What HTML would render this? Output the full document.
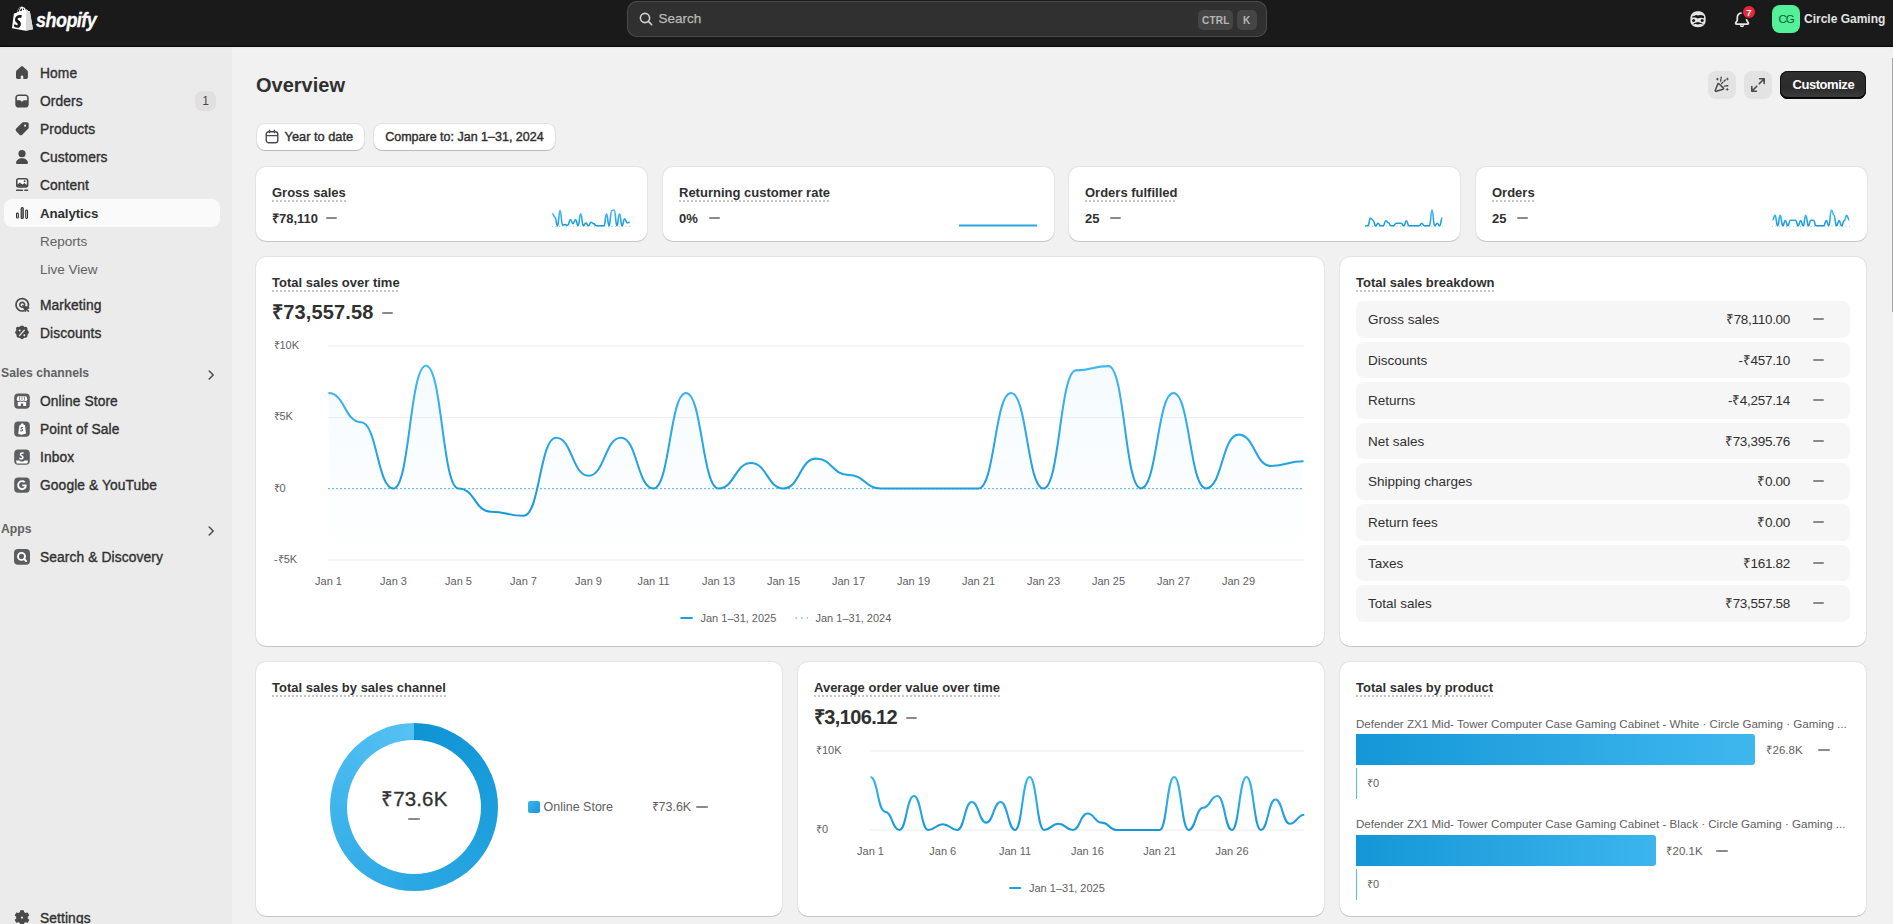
<!DOCTYPE html>
<html><head><meta charset="utf-8"><title>Overview</title>
<style>
*{box-sizing:border-box;margin:0;padding:0}
html,body{width:1893px;height:924px;overflow:hidden}
body{position:relative;background:#f1f1f1;font-family:"Liberation Sans",sans-serif;color:#303030}
.t{position:absolute;line-height:1;white-space:nowrap}
#top{position:absolute;left:0;top:0;width:1893px;height:47px;background:#1a1a1a;box-shadow:inset 0 -1.2px 0 #0a0a0a,0 1px 3px rgba(0,0,0,.05);z-index:2}
#side{position:absolute;left:0;top:47px;width:232px;height:877px;background:#ebebeb}
.nav{position:absolute;left:0;width:232px;height:28px}
.nav .ni{position:absolute;left:14px;top:6px;width:16px;height:16px}
.nav .nt{position:absolute;left:40px;top:8.1px;font-size:13.8px;letter-spacing:.1px;line-height:1;color:#303030;white-space:nowrap;-webkit-text-stroke:.35px #303030}
.badge{position:absolute;left:195px;top:4px;width:21px;height:20px;border-radius:7px;background:#e0e0e0;font-size:12px;line-height:20px;text-align:center;color:#4a4a4a}
.sel{position:absolute;left:4px;top:199px;width:216px;height:28px;border-radius:8px;background:#fafafa}
.sub{position:absolute;left:40px;font-size:13.5px;line-height:1;color:#616161;white-space:nowrap}
.sec{position:absolute;left:1px;width:232px;font-size:12.2px;font-weight:bold;line-height:1;color:#616161}
.sec .chev{position:absolute;left:202px;top:0px;width:16px;height:16px}
.card{position:absolute;background:#fff;border-radius:10px;box-shadow:0 0 0 1px rgba(0,0,0,.05),0 1px 0 0 rgba(0,0,0,.13)}
.ttl{position:absolute;line-height:1;font-size:13px;font-weight:bold;white-space:nowrap;color:#303030;padding-bottom:3px;background-image:linear-gradient(90deg,#c6c6c6 50%,transparent 50%);background-size:4px 2px;background-repeat:repeat-x;background-position:0 100%}
.dash{position:absolute;height:2px;width:11px;background:#8a8a8a;border-radius:1px}
.btn{position:absolute;background:#fff;border-radius:8px;box-shadow:0 0 0 1px rgba(0,0,0,.07),0 1px 0 0 rgba(0,0,0,.16)}
.xl{position:absolute;width:60px;margin-left:-30px;text-align:center;font-size:11px;line-height:1;color:#616161;white-space:nowrap}
.yl{position:absolute;font-size:11px;line-height:1;color:#616161;white-space:nowrap}
.brow{position:absolute;left:1356px;width:494px;height:36.5px;border-radius:8px;background:#f6f6f6}
.bl{position:absolute;left:12px;top:12px;font-size:13.5px;line-height:1;color:#303030;white-space:nowrap}
.bv{position:absolute;right:60px;top:12px;font-size:13.5px;letter-spacing:-.3px;line-height:1;color:#303030;white-space:nowrap}
.bd{left:457px;top:17px}
</style></head><body>
<div id="top">
  <svg style="position:absolute;left:9.9px;top:6.35px" width="23.1" height="27.25" viewBox="0 0 22 25" preserveAspectRatio="none"><path fill="#fff" d="M18.9 4.8c0-.1-.1-.2-.2-.2s-1.6-.1-1.6-.1-1.1-1.1-1.2-1.2c-.1-.1-.3-.1-.4-.1l-.6.2C14.6 2.4 14 1.2 12.7 1.2h-.1c-.4-.5-.8-.7-1.2-.7-3 0-4.4 3.7-4.9 5.6l-2.1.6c-.6.2-.7.2-.8.8C3.5 7.9 1.9 20.4 1.9 20.4L14.9 22.8 22 21.3S18.9 4.9 18.9 4.8zM13.4 3.5l-1 .3V3.6c0-.7-.1-1.2-.3-1.7.6.1 1 .8 1.3 1.6zm-2.2-1.5c.2.5.3 1.1.3 2v.1L9.4 4.8c.4-1.6 1.2-2.4 1.8-2.8zM10.4 1.3c.1 0 .2 0 .3.1-.9.4-1.8 1.4-2.2 3.6l-1.6.5C7.4 4 8.5 1.3 10.4 1.3z"/><path fill="#d8d8d8" d="M18.7 4.6c-.1 0-1.6-.1-1.6-.1l-1.2-1.2c0 0-.1-.1-.2-.1L14.9 22.8 22 21.3S18.9 4.9 18.9 4.8c0-.1-.1-.2-.2-.2z"/><path fill="#1a1a1a" d="M11.4 8.6l-.9 2.6s-.8-.4-1.7-.4c-1.4 0-1.5.9-1.5 1.1 0 1.2 3.1 1.7 3.1 4.5 0 2.2-1.4 3.6-3.3 3.6-2.2 0-3.4-1.4-3.4-1.4l.6-2s1.2 1 2.2 1c.6 0 .9-.5.9-.9 0-1.6-2.6-1.6-2.6-4.2 0-2.2 1.6-4.3 4.7-4.3 1.3 0 1.9.4 1.9.4z"/></svg>
  <div class="t" style="left:36px;top:9.5px;font-size:20px;font-weight:bold;font-style:italic;color:#fff;letter-spacing:-0.6px;transform:scaleX(.9);transform-origin:0 0;-webkit-text-stroke:.3px #fff">shopify</div>
  <div style="position:absolute;left:627px;top:1px;width:640px;height:36px;border-radius:10px;background:#303030;box-shadow:inset 0 0 0 1px #4a4a4a"></div>
  <svg style="position:absolute;left:639px;top:12px" width="14" height="14" viewBox="0 0 14 14"><circle cx="6" cy="6" r="4.6" fill="none" stroke="#d0d0d0" stroke-width="1.6"/><path d="M9.4 9.4l3.2 3.2" stroke="#d0d0d0" stroke-width="1.6" stroke-linecap="round"/></svg>
  <div class="t" style="left:658.6px;top:12px;font-size:13.5px;color:#b8b8b8;-webkit-text-stroke:.25px #b8b8b8">Search</div>
  <div style="position:absolute;left:1198px;top:10px;width:35px;height:20px;border-radius:5px;background:#454545"></div>
  <div class="t" style="left:1202px;top:16px;font-size:10px;font-weight:bold;color:#b5b5b5;letter-spacing:.2px">CTRL</div>
  <div style="position:absolute;left:1237px;top:10px;width:20px;height:20px;border-radius:5px;background:#454545"></div>
  <div class="t" style="left:1243px;top:16px;font-size:10px;font-weight:bold;color:#b5b5b5">K</div>
  <svg style="position:absolute;left:1690px;top:10.7px" width="16" height="17" viewBox="0 0 16 17"><path d="M8 .3c4.6 0 7.6 2.6 7.6 7.2v2.6c0 3.7-3 6.2-7.6 6.2S.4 13.8.4 10.1V7.5C.4 2.9 3.4.3 8 .3z" fill="#e6e6e6"/><path d="M1.9 6.6c.4-1.6 1.4-2.3 2.5-1.7.9-1 2.5-1.1 3.6-.3 1.3-.8 3.6-.9 6.1.5l-.2 2.1c-2.4-.9-4.6-.6-5.9.3-1.4-.9-4-.9-6.1-.9z" fill="#1a1a1a"/><circle cx="3.6" cy="9.6" r="1.5" fill="#1a1a1a"/><circle cx="12.2" cy="9.6" r="1.5" fill="#1a1a1a"/><path d="M2.3 13.6c1.5-.9 3-2.2 5.6-2.6 2.6.4 4.1 1.7 5.8 2.6-1.5-.3-2.9-.9-3.8-.5-.6.3-1.2.5-2 .5s-1.4-.2-2-.5c-.9-.4-2.3.2-3.6.5z" fill="#1a1a1a"/></svg>
  <svg style="position:absolute;left:1734px;top:11px" width="16" height="17" viewBox="0 0 16 17"><path d="M8 1.8c-2.7 0-4.7 2.1-4.7 4.7v2.8L1.7 12c-.3.6.1 1.1.7 1.1h11.2c.6 0 1-.5.7-1.1l-1.6-2.7V6.5C12.7 3.9 10.7 1.8 8 1.8z" fill="none" stroke="#e6e6e6" stroke-width="1.7" stroke-linejoin="round"/><path d="M6.4 14.2a1.7 1.7 0 0 0 3.2 0" fill="none" stroke="#e6e6e6" stroke-width="1.7"/></svg>
  <div style="position:absolute;left:1743px;top:6px;width:12px;height:12px;border-radius:6px;background:#e5283a;box-shadow:0 0 0 1.5px #1a1a1a"></div>
  <div class="t" style="left:1746.3px;top:7.6px;font-size:9.6px;font-weight:bold;color:#fff">7</div>
  <div style="position:absolute;left:1772px;top:5px;width:28px;height:28px;border-radius:8px;background:#54f09a"></div>
  <div class="t" style="left:1778.4px;top:13.3px;font-size:11.6px;letter-spacing:-1px;color:#0b5c35">CG</div>
  <div class="t" style="left:1804px;top:12.8px;font-size:12px;font-weight:bold;color:#e3e3e3">Circle Gaming</div>
</div>
<div id="side">
<div style="position:absolute;left:0;top:-47px;width:232px;height:924px">
<div class="nav" style="top:59px"><svg class="ni" viewBox="0 0 16 16" fill="#4a4a4a"><path d="M8 1.3c.45 0 .88.16 1.2.46l3.9 3.6c.5.45.8 1.05.8 1.7v5.2c0 .97-.78 1.74-1.75 1.74H9.3v-2.3a1.3 1.3 0 0 0-2.6 0v2.3H3.75C2.78 14 2 13.22 2 12.25V7.06c0-.65.3-1.25.8-1.7l3.9-3.6c.32-.3.75-.46 1.3-.46z"/></svg><span class="nt">Home</span></div><div class="nav" style="top:87px"><svg class="ni" viewBox="0 0 16 16" fill="#4a4a4a"><path d="M4.5 1.4h7c1.8 0 3.2 1.4 3.2 3.2v6.8c0 1.8-1.4 3.2-3.2 3.2h-7c-1.8 0-3.2-1.4-3.2-3.2V4.6c0-1.8 1.4-3.2 3.2-3.2zm0 1.6c-.9 0-1.6.7-1.6 1.6v2.6h3.2l1.9 1.6 1.9-1.6h3.2V4.6c0-.9-.7-1.6-1.6-1.6z"/></svg><span class="nt">Orders</span><span class="badge">1</span></div><div class="nav" style="top:115px"><svg class="ni" viewBox="0 0 16 16" fill="#4a4a4a"><path d="M9.6 1.3h3.3c1 0 1.8.8 1.8 1.8v3.3c0 .5-.2 1-.55 1.35l-5.9 5.9a1.9 1.9 0 0 1-2.7 0L2.2 10.3a1.9 1.9 0 0 1 0-2.7l5.9-5.9c.4-.35.9-.4 1.5-.4zM11.1 3.6a1.05 1.05 0 1 0 0 2.1 1.05 1.05 0 0 0 0-2.1z"/></svg><span class="nt">Products</span></div><div class="nav" style="top:143px"><svg class="ni" viewBox="0 0 16 16" fill="#4a4a4a"><circle cx="8" cy="4.7" r="3.6"/><path d="M2 14.1c0-2.7 2.7-4.8 6-4.8s6 2.1 6 4.8c0 .5-.4.8-.8.8H2.8c-.4 0-.8-.3-.8-.8z"/></svg><span class="nt">Customers</span></div><div class="nav" style="top:171px"><svg class="ni" viewBox="0 0 16 16" fill="#4a4a4a"><rect x="2.8" y="1.8" width="10.8" height="8.2" rx="2" fill="#fff" stroke="#4a4a4a" stroke-width="1.6"/><path d="M2.6 8.2l3.2-2.6 2.6 2 2-1.6 3.2 2.4v1.4H2.6z" fill="#4a4a4a"/><circle cx="10.6" cy="4.3" r="1" fill="#4a4a4a"/><rect x="2" y="12.6" width="7" height="1.4" rx=".6"/><rect x="10.2" y="12.6" width="4" height="1.4" rx=".6"/></svg><span class="nt">Content</span></div><div class="sel"></div><div class="nav" style="top:199px"><svg class="ni" viewBox="0 0 16 16" fill="#4a4a4a"><rect x="2.55" y="8.15" width="1.75" height="4.9" rx=".85" fill="#fff" stroke="#303030" stroke-width="1.1"/><rect x="7.15" y="2.55" width="2.1" height="10.9" rx="1" fill="#8f8f8f" stroke="#303030" stroke-width="1.1"/><rect x="11.75" y="4.95" width="1.75" height="8.5" rx=".85" fill="#fff" stroke="#303030" stroke-width="1.1"/></svg><span class="nt"><b style="font-weight:bold;-webkit-text-stroke:0;letter-spacing:-.1px;font-size:13.3px">Analytics</b></span></div><div class="sub" style="top:234.6px">Reports</div><div class="sub" style="top:262.6px">Live View</div><div class="nav" style="top:291px"><svg class="ni" viewBox="0 0 16 16" fill="#4a4a4a"><path d="M9.28 13.9A6.2 6.2 0 1 1 14.19 9.4" fill="none" stroke="#4a4a4a" stroke-width="1.7" stroke-linecap="round"/><path d="M8.62 10.16A2.4 2.4 0 1 1 10.56 8.22" fill="none" stroke="#4a4a4a" stroke-width="1.6" stroke-linecap="round"/><path d="M8.7 8.4l6.6 2.5-2.9 1.1-1.1 3z" stroke="#4a4a4a" stroke-width="1" stroke-linejoin="round"/><path d="M12.3 12.1l2.1 2.1" stroke="#4a4a4a" stroke-width="1.5" stroke-linecap="round"/></svg><span class="nt">Marketing</span></div><div class="nav" style="top:319px"><svg class="ni" viewBox="0 0 16 16" fill="#4a4a4a"><path d="M6.6 1.1a2 2 0 0 1 2.8 0l.9.8 1.2-.05a2 2 0 0 1 2 2l-.05 1.2.8.9a2 2 0 0 1 0 2.8l-.8.9.05 1.2a2 2 0 0 1-2 2l-1.2-.05-.9.8a2 2 0 0 1-2.8 0l-.9-.8-1.2.05a2 2 0 0 1-2-2l.05-1.2-.8-.9a2 2 0 0 1 0-2.8l.8-.9L1.85 3.85a2 2 0 0 1 2-2l1.2.05z"/><path d="M10.3 5.2 5.5 10.6" stroke="#ebebeb" stroke-width="1.3" stroke-linecap="round"/><circle cx="5.7" cy="5.6" r="1" fill="#ebebeb"/><circle cx="10.3" cy="10.2" r="1" fill="#ebebeb"/></svg><span class="nt">Discounts</span></div><div class="sec" style="top:367.3px">Sales channels<svg class="chev" viewBox="0 0 16 16"><path d="M6.2 4l4 4-4 4" fill="none" stroke="#4a4a4a" stroke-width="1.5" stroke-linecap="round" stroke-linejoin="round"/></svg></div><div class="nav" style="top:387px"><svg class="ni" viewBox="0 0 16 16" fill="#4a4a4a"><rect x=".2" y=".4" width="15.6" height="15.4" rx="4" fill="#5c5f62"/><path d="M4.3 3.2h7.4c.5 0 .9.3 1 .8l.6 2.3c0 1-.8 1.8-1.8 1.8-.7 0-1.2-.3-1.6-.8-.4.5-1 .8-1.9.8s-1.5-.3-1.9-.8c-.4.5-.9.8-1.6.8-1 0-1.8-.8-1.8-1.8l.6-2.3c.1-.5.5-.8 1-.8zM3.8 8.8c.4.1.7.2 1.1.2.7 0 1.1-.2 1.5-.5.5.3 1.1.5 1.6.5.6 0 1.2-.2 1.6-.5.4.3.9.5 1.5.5.4 0 .7-.1 1.1-.2v3.5c0 .4-.3.7-.7.7H4.5c-.4 0-.7-.3-.7-.7zm3 1.7V13h2.4v-2.5z" fill="#fff"/><path d="M5.8 3.4l-.5 3.6M10.2 3.4l.5 3.6M8 3.4v3.6" stroke="#5c5f62" stroke-width=".7"/></svg><span class="nt">Online Store</span></div><div class="nav" style="top:415px"><svg class="ni" viewBox="0 0 16 16" fill="#4a4a4a"><rect x=".2" y=".4" width="15.6" height="15.4" rx="4" fill="#5c5f62"/><path d="M6.6 4.2c.3-1.2 1-1.9 1.8-1.9s1.3.8 1.3 1.7l1.3-.1 1 8.8-4.6 1-3.2-.6 1.1-8.6zm1.6.6c.2-.6.5-1.2 1-1.2.2.4.3.8.3 1.2z" fill="#fff"/><path d="M9 6.2c-.3-.2-.7-.3-1.1-.3-1 0-1.5.6-1.5 1.2 0 1.1 1.6 1.1 1.6 1.8 0 .3-.2.5-.6.5-.5 0-1-.4-1-.4l-.3 1s.5.6 1.3.6c.9 0 1.6-.6 1.6-1.5 0-1.2-1.6-1.3-1.6-1.8 0-.1.1-.4.6-.4.3 0 .6.1.6.1z" fill="#5c5f62"/></svg><span class="nt">Point of Sale</span></div><div class="nav" style="top:443px"><svg class="ni" viewBox="0 0 16 16" fill="#4a4a4a"><rect x=".2" y=".4" width="15.6" height="15.4" rx="4" fill="#5c5f62"/><path d="M9.9 3.7c-.4-.3-1-.4-1.6-.4-1.6 0-2.5.9-2.5 2.1 0 1.7 2.4 1.8 2.4 2.8 0 .5-.4.8-1 .8-.8 0-1.6-.6-1.6-.6l-.5 1.4s.8.8 2 .8c1.5 0 2.6-.9 2.6-2.4 0-1.8-2.4-2-2.4-2.8 0-.3.2-.6.9-.6.5 0 1 .2 1 .2z" fill="#fff"/><path d="M2.2 11.6h3.3l1 1h3l1-1h3.3v1.4c0 .9-.6 1.5-1.4 1.5H3.6c-.8 0-1.4-.6-1.4-1.5z" fill="#fff"/></svg><span class="nt">Inbox</span></div><div class="nav" style="top:471px"><svg class="ni" viewBox="0 0 16 16" fill="#4a4a4a"><rect x=".2" y=".4" width="15.6" height="15.4" rx="4" fill="#5c5f62"/><path d="M8.1 3.3c1.3 0 2.4.5 3.2 1.2l-1.2 1.2c-.5-.4-1.2-.7-2-.7-1.7 0-3 1.3-3 3s1.3 3 3 3c1.4 0 2.3-.7 2.6-1.8H8.2V7.6h4.4c.1.3.1.6.1.9 0 2.8-1.9 4.6-4.6 4.6A4.9 4.9 0 0 1 8.1 3.3z" fill="#fff"/></svg><span class="nt">Google &amp; YouTube</span></div><div class="sec" style="top:523px">Apps<svg class="chev" viewBox="0 0 16 16"><path d="M6.2 4l4 4-4 4" fill="none" stroke="#4a4a4a" stroke-width="1.5" stroke-linecap="round" stroke-linejoin="round"/></svg></div><div class="nav" style="top:543px"><svg class="ni" viewBox="0 0 16 16" fill="#4a4a4a"><rect x="0" y="0" width="16" height="15.7" rx="4" fill="#5c5f62"/><circle cx="7.5" cy="7.4" r="3.5" fill="none" stroke="#fff" stroke-width="1.9"/><path d="M10.1 10l2 2.1" stroke="#fff" stroke-width="1.9" stroke-linecap="round"/></svg><span class="nt">Search &amp; Discovery</span></div><div class="nav" style="top:904px"><svg class="ni" viewBox="0 0 16 16" fill="#4a4a4a"><path fill-rule="evenodd" stroke="#4a4a4a" stroke-width="1.2" stroke-linejoin="round" d="M5.40 3.10 L6.48 2.63 L6.66 0.73 L9.34 0.73 L9.52 2.63 L10.60 3.10 L11.55 3.80 L13.28 3.01 L14.62 5.32 L13.07 6.43 L13.20 7.60 L13.07 8.77 L14.62 9.88 L13.28 12.19 L11.55 11.40 L10.60 12.10 L9.52 12.57 L9.34 14.47 L6.66 14.47 L6.48 12.57 L5.40 12.10 L4.45 11.40 L2.72 12.19 L1.38 9.88 L2.93 8.77 L2.80 7.60 L2.93 6.43 L1.38 5.32 L2.72 3.01 L4.45 3.80Z M6.30 7.60 a1.7 1.7 0 1 0 3.4 0 a1.7 1.7 0 1 0 -3.4 0Z"/></svg><span class="nt">Settings</span></div>
</div>
</div>
<!-- scrollbar -->
<div style="position:absolute;left:1891.6px;top:58.2px;width:1.4px;height:253.7px;background:#a8a8a8"></div>

<div class="t" style="left:256px;top:75.1px;font-size:20px;font-weight:bold;color:#303030">Overview</div>
<div style="position:absolute;left:1708px;top:71px;width:28px;height:28px;border-radius:8px;background:#e3e3e3"></div>
<svg style="position:absolute;left:1713.5px;top:76px" width="17" height="17" viewBox="0 0 17 17"><path d="M2.2 15.2c-.7.2-1.2-.4-.9-1l2.6-6.3c.2-.5.8-.6 1.1-.2l4.4 4.4c.4.4.2 1-.3 1.2z" fill="none" stroke="#4a4a4a" stroke-width="1.5" stroke-linejoin="round"/><path d="M7.6 7.6l1.1-1.1M10 5.2l1.3-1.3M6.6 5.1l.2-1.6M7.1 2.2l.1-.9M10.3 10.1l1.6-.2M12.9 9.8l.9-.1" stroke="#4a4a4a" stroke-width="1.4" stroke-linecap="round"/><path d="M3.4 1.4l.6 1.1 1.1.6-1.1.6-.6 1.1-.6-1.1-1.1-.6 1.1-.6zM13.4 1.3l.6 1.1 1.1.6-1.1.6-.6 1.1-.6-1.1-1.1-.6 1.1-.6zM13.2 11.7l.6 1.1 1.1.6-1.1.6-.6 1.1-.6-1.1-1.1-.6 1.1-.6z" fill="#4a4a4a"/></svg>
<div style="position:absolute;left:1744px;top:71px;width:28px;height:28px;border-radius:8px;background:#e3e3e3"></div>
<svg style="position:absolute;left:1750px;top:77px" width="16" height="16" viewBox="0 0 16 16"><path d="M9.6 1.8h4.6v4.6M14 2l-4.8 4.8M6.4 14.2H1.8V9.6M2 14l4.8-4.8" fill="none" stroke="#4a4a4a" stroke-width="1.6" stroke-linecap="round" stroke-linejoin="round"/></svg>
<div style="position:absolute;left:1780px;top:71px;width:86px;height:28px;border-radius:8px;background:linear-gradient(#303030 0%,#2b2b2b 60%,#404040 100%);box-shadow:inset 0 0 0 1px #111,inset 0 -2px 0 #000"></div>
<div class="t" style="left:1792.5px;top:78px;font-size:13px;font-weight:bold;color:#fff;letter-spacing:-0.45px">Customize</div>

<div class="btn" style="left:257px;top:124px;width:107px;height:26px"></div>
<svg style="position:absolute;left:264px;top:129px" width="16" height="16" viewBox="0 0 16 16"><rect x="2.2" y="2.8" width="11.6" height="11" rx="2.6" fill="none" stroke="#4a4a4a" stroke-width="1.4"/><path d="M2.6 6.6h10.8M5.6 1.2v2.4M10.4 1.2v2.4" stroke="#4a4a4a" stroke-width="1.4" stroke-linecap="round"/></svg>
<div class="t" style="left:284.6px;top:131.3px;font-size:12.8px;-webkit-text-stroke:.4px #303030">Year to date</div>
<div class="btn" style="left:374px;top:124px;width:181px;height:26px"></div>
<div class="t" style="left:385.2px;top:130.6px;font-size:12.5px;-webkit-text-stroke:.4px #303030">Compare to: Jan 1–31, 2024</div>

<!-- KPI cards -->
<div class="card" style="left:256px;top:167px;width:391px;height:74px"></div>
<div class="card" style="left:663px;top:167px;width:391px;height:74px"></div>
<div class="card" style="left:1069px;top:167px;width:391px;height:74px"></div>
<div class="card" style="left:1476px;top:167px;width:391px;height:74px"></div>
<div class="ttl" style="left:272px;top:186.2px">Gross sales</div>
<div class="t" style="left:272px;top:211.8px;font-size:13px;font-weight:bold">₹78,110</div>
<div class="dash" style="left:325.5px;top:217px"></div>
<svg style="position:absolute;left:0;top:0" width="1893" height="924"><defs><linearGradient id="sg" x1="0" y1="209" x2="0" y2="227" gradientUnits="userSpaceOnUse"><stop offset="0" stop-color="#4dc1f5"/><stop offset="1" stop-color="#1396d5"/></linearGradient></defs><path d="M552 226.3H630M1365 226.3H1443M1772 226.3H1850" stroke="#8fd0f0" stroke-width="1" stroke-dasharray="1 2.5"/><path d="M552.3 213.5 C553.6 213.5 553.6 217.1 554.9 217.1 C556.2 217.1 556.2 225.8 557.5 225.8 C558.8 225.8 558.8 210.3 560.0 210.3 C561.3 210.3 561.3 225.1 562.6 225.1 C563.9 225.1 563.9 224.6 565.2 224.6 C566.5 224.6 566.5 225.3 567.8 225.3 C569.1 225.3 569.1 219.6 570.4 219.6 C571.7 219.6 571.7 223.6 573.0 223.6 C574.3 223.6 574.3 219.6 575.5 219.6 C576.8 219.6 576.8 225.6 578.1 225.6 C579.4 225.6 579.4 213.8 580.7 213.8 C582.0 213.8 582.0 225.6 583.3 225.6 C584.6 225.6 584.6 223.1 585.9 223.1 C587.2 223.1 587.2 225.8 588.5 225.8 C589.8 225.8 589.8 222.3 591.0 222.3 C592.3 222.3 592.3 223.6 593.6 223.6 C594.9 223.6 594.9 225.8 596.2 225.8 C597.5 225.8 597.5 225.8 598.8 225.8 C600.1 225.8 600.1 225.8 601.4 225.8 C602.7 225.8 602.7 225.8 604.0 225.8 C605.3 225.8 605.3 213.8 606.5 213.8 C607.8 213.8 607.8 225.8 609.1 225.8 C610.4 225.8 610.4 210.5 611.7 210.5 C613.0 210.5 613.0 210.0 614.3 210.0 C615.6 210.0 615.6 225.8 616.9 225.8 C618.2 225.8 618.2 213.8 619.5 213.8 C620.8 213.8 620.8 225.8 622.0 225.8 C623.3 225.8 623.3 218.8 624.6 218.8 C625.9 218.8 625.9 222.8 627.2 222.8 C628.5 222.8 628.5 222.3 629.8 222.3" fill="none" stroke="url(#sg)" stroke-width="1.6"/><path d="M1365.3 225.8 C1366.6 225.8 1366.6 225.8 1367.9 225.8 C1369.2 225.8 1369.2 218.1 1370.4 218.1 C1371.7 218.1 1371.7 220.3 1373.0 220.3 C1374.3 220.3 1374.3 225.8 1375.6 225.8 C1376.8 225.8 1376.8 223.3 1378.1 223.3 C1379.4 223.3 1379.4 225.8 1380.7 225.8 C1382.0 225.8 1382.0 225.8 1383.3 225.8 C1384.5 225.8 1384.5 220.8 1385.8 220.8 C1387.1 220.8 1387.1 222.8 1388.4 222.8 C1389.7 222.8 1389.7 225.8 1391.0 225.8 C1392.2 225.8 1392.2 225.8 1393.5 225.8 C1394.8 225.8 1394.8 223.3 1396.1 223.3 C1397.4 223.3 1397.4 223.3 1398.7 223.3 C1399.9 223.3 1399.9 223.3 1401.2 223.3 C1402.5 223.3 1402.5 225.8 1403.8 225.8 C1405.1 225.8 1405.1 220.8 1406.4 220.8 C1407.7 220.8 1407.7 225.8 1408.9 225.8 C1410.2 225.8 1410.2 225.8 1411.5 225.8 C1412.8 225.8 1412.8 225.8 1414.1 225.8 C1415.3 225.8 1415.3 225.8 1416.6 225.8 C1417.9 225.8 1417.9 225.8 1419.2 225.8 C1420.5 225.8 1420.5 223.3 1421.8 223.3 C1423.0 223.3 1423.0 225.8 1424.3 225.8 C1425.6 225.8 1425.6 225.8 1426.9 225.8 C1428.2 225.8 1428.2 225.8 1429.5 225.8 C1430.8 225.8 1430.8 209.8 1432.0 209.8 C1433.3 209.8 1433.3 225.8 1434.6 225.8 C1435.9 225.8 1435.9 223.3 1437.2 223.3 C1438.4 223.3 1438.4 225.8 1439.7 225.8 C1441.0 225.8 1441.0 217.6 1442.3 217.6" fill="none" stroke="url(#sg)" stroke-width="1.6"/><path d="M1772.5 220.3 C1773.8 220.3 1773.8 215.3 1775.1 215.3 C1776.3 215.3 1776.3 225.8 1777.6 225.8 C1778.9 225.8 1778.9 215.3 1780.2 215.3 C1781.5 215.3 1781.5 225.8 1782.7 225.8 C1784.0 225.8 1784.0 220.6 1785.3 220.6 C1786.6 220.6 1786.6 225.8 1787.9 225.8 C1789.1 225.8 1789.1 220.3 1790.4 220.3 C1791.7 220.3 1791.7 220.3 1793.0 220.3 C1794.3 220.3 1794.3 220.3 1795.5 220.3 C1796.8 220.3 1796.8 225.8 1798.1 225.8 C1799.4 225.8 1799.4 220.6 1800.7 220.6 C1801.9 220.6 1801.9 225.8 1803.2 225.8 C1804.5 225.8 1804.5 215.3 1805.8 215.3 C1807.1 215.3 1807.1 225.8 1808.3 225.8 C1809.6 225.8 1809.6 220.3 1810.9 220.3 C1812.2 220.3 1812.2 220.3 1813.5 220.3 C1814.7 220.3 1814.7 225.8 1816.0 225.8 C1817.3 225.8 1817.3 225.8 1818.6 225.8 C1819.9 225.8 1819.9 225.8 1821.1 225.8 C1822.4 225.8 1822.4 225.8 1823.7 225.8 C1825.0 225.8 1825.0 220.6 1826.3 220.6 C1827.5 220.6 1827.5 225.8 1828.8 225.8 C1830.1 225.8 1830.1 210.0 1831.4 210.0 C1832.7 210.0 1832.7 215.1 1833.9 215.1 C1835.2 215.1 1835.2 225.8 1836.5 225.8 C1837.8 225.8 1837.8 220.6 1839.1 220.6 C1840.3 220.6 1840.3 225.8 1841.6 225.8 C1842.9 225.8 1842.9 220.6 1844.2 220.6 C1845.5 220.6 1845.5 215.3 1846.7 215.3 C1848.0 215.3 1848.0 220.3 1849.3 220.3" fill="none" stroke="url(#sg)" stroke-width="1.6"/><path d="M959 225.5H1037" stroke="#2aa5e2" stroke-width="1.8"/></svg>
<div class="ttl" style="left:679px;top:186.2px">Returning customer rate</div>
<div class="t" style="left:679px;top:211.8px;font-size:13px;font-weight:bold">0%</div>
<div class="dash" style="left:709px;top:217px"></div>
<div class="ttl" style="left:1085px;top:186.2px">Orders fulfilled</div>
<div class="t" style="left:1085px;top:211.8px;font-size:13px;font-weight:bold">25</div>
<div class="dash" style="left:1109.5px;top:217px"></div>
<div class="ttl" style="left:1492px;top:186.2px">Orders</div>
<div class="t" style="left:1492px;top:211.8px;font-size:13px;font-weight:bold">25</div>
<div class="dash" style="left:1517px;top:217px"></div>

<!-- Total sales over time -->
<div class="card" style="left:256px;top:257px;width:1068px;height:389px"></div>
<div class="ttl" style="left:272px;top:275.5px">Total sales over time</div>
<div class="t" style="left:272px;top:302.3px;font-size:20px;font-weight:bold;letter-spacing:.15px">₹73,557.58</div>
<div class="dash" style="left:382px;top:312px;height:1.6px"></div>
<div class="yl" style="left:273.5px;top:340px">₹10K</div>
<div class="yl" style="left:273.5px;top:411px">₹5K</div>
<div class="yl" style="left:273.5px;top:483.3px">₹0</div>
<div class="yl" style="left:274px;top:554.3px">-₹5K</div>
<svg style="position:absolute;left:0;top:0" width="1893" height="924">
<defs><linearGradient id="lg" x1="0" y1="346" x2="0" y2="530" gradientUnits="userSpaceOnUse"><stop offset="0" stop-color="#48bcf2"/><stop offset="1" stop-color="#1195d5"/></linearGradient><linearGradient id="fg" x1="0" y1="346" x2="0" y2="559" gradientUnits="userSpaceOnUse"><stop offset="0" stop-color="#2aa6e4" stop-opacity=".055"/><stop offset="1" stop-color="#1d9fdb" stop-opacity="0"/></linearGradient>
</defs>
<path d="M328 346H1304M328 560H1304" stroke="#ebebeb" stroke-width="1"/><path d="M328 417.5H1304" stroke="#efefef" stroke-width="1"/>
<path d="M328.5 393.0 C344.8 393.0 344.8 422.2 361.0 422.2 C377.2 422.2 377.2 488.4 393.5 488.4 C409.8 488.4 409.8 365.7 426.0 365.7 C442.2 365.7 442.2 488.4 458.5 488.4 C474.8 488.4 474.8 511.7 491.0 511.7 C507.2 511.7 507.2 515.8 523.5 515.8 C539.8 515.8 539.8 437.7 556.0 437.7 C572.2 437.7 572.2 475.7 588.5 475.7 C604.8 475.7 604.8 437.7 621.0 437.7 C637.2 437.7 637.2 488.4 653.5 488.4 C669.8 488.4 669.8 393.0 686.0 393.0 C702.2 393.0 702.2 488.4 718.5 488.4 C734.8 488.4 734.8 463.0 751.0 463.0 C767.2 463.0 767.2 488.4 783.5 488.4 C799.8 488.4 799.8 458.6 816.0 458.6 C832.2 458.6 832.2 475.0 848.5 475.0 C864.8 475.0 864.8 488.4 881.0 488.4 C897.2 488.4 897.2 488.4 913.5 488.4 C929.8 488.4 929.8 488.4 946.0 488.4 C962.2 488.4 962.2 488.4 978.5 488.4 C994.8 488.4 994.8 393.0 1011.0 393.0 C1027.2 393.0 1027.2 488.4 1043.5 488.4 C1059.8 488.4 1059.8 370.4 1076.0 370.4 C1092.2 370.4 1092.2 366.1 1108.5 366.1 C1124.8 366.1 1124.8 488.4 1141.0 488.4 C1157.2 488.4 1157.2 393.0 1173.5 393.0 C1189.8 393.0 1189.8 488.4 1206.0 488.4 C1222.2 488.4 1222.2 434.6 1238.5 434.6 C1254.8 434.6 1254.8 465.9 1271.0 465.9 C1287.2 465.9 1287.2 461.3 1303.5 461.3 L1303.5 559 L328.5 559 Z" fill="url(#fg)"/>
<path d="M328 488.6H1304" stroke="#6cc0ea" stroke-width="1.35" stroke-dasharray="2 2"/>
<path d="M328.5 393.0 C344.8 393.0 344.8 422.2 361.0 422.2 C377.2 422.2 377.2 488.4 393.5 488.4 C409.8 488.4 409.8 365.7 426.0 365.7 C442.2 365.7 442.2 488.4 458.5 488.4 C474.8 488.4 474.8 511.7 491.0 511.7 C507.2 511.7 507.2 515.8 523.5 515.8 C539.8 515.8 539.8 437.7 556.0 437.7 C572.2 437.7 572.2 475.7 588.5 475.7 C604.8 475.7 604.8 437.7 621.0 437.7 C637.2 437.7 637.2 488.4 653.5 488.4 C669.8 488.4 669.8 393.0 686.0 393.0 C702.2 393.0 702.2 488.4 718.5 488.4 C734.8 488.4 734.8 463.0 751.0 463.0 C767.2 463.0 767.2 488.4 783.5 488.4 C799.8 488.4 799.8 458.6 816.0 458.6 C832.2 458.6 832.2 475.0 848.5 475.0 C864.8 475.0 864.8 488.4 881.0 488.4 C897.2 488.4 897.2 488.4 913.5 488.4 C929.8 488.4 929.8 488.4 946.0 488.4 C962.2 488.4 962.2 488.4 978.5 488.4 C994.8 488.4 994.8 393.0 1011.0 393.0 C1027.2 393.0 1027.2 488.4 1043.5 488.4 C1059.8 488.4 1059.8 370.4 1076.0 370.4 C1092.2 370.4 1092.2 366.1 1108.5 366.1 C1124.8 366.1 1124.8 488.4 1141.0 488.4 C1157.2 488.4 1157.2 393.0 1173.5 393.0 C1189.8 393.0 1189.8 488.4 1206.0 488.4 C1222.2 488.4 1222.2 434.6 1238.5 434.6 C1254.8 434.6 1254.8 465.9 1271.0 465.9 C1287.2 465.9 1287.2 461.3 1303.5 461.3" fill="none" stroke="url(#lg)" stroke-width="2.05"/>
<path d="M681.2 618H692" stroke="#1d9fdb" stroke-width="2" stroke-linecap="round"/>
<path d="M795.5 618H808" stroke="#6cc0ea" stroke-width="1.6" stroke-dasharray="1.6 4.1"/>
</svg>
<div class="xl" style="left:328.5px;top:576px">Jan 1</div><div class="xl" style="left:393.5px;top:576px">Jan 3</div><div class="xl" style="left:458.5px;top:576px">Jan 5</div><div class="xl" style="left:523.5px;top:576px">Jan 7</div><div class="xl" style="left:588.5px;top:576px">Jan 9</div><div class="xl" style="left:653.5px;top:576px">Jan 11</div><div class="xl" style="left:718.5px;top:576px">Jan 13</div><div class="xl" style="left:783.5px;top:576px">Jan 15</div><div class="xl" style="left:848.5px;top:576px">Jan 17</div><div class="xl" style="left:913.5px;top:576px">Jan 19</div><div class="xl" style="left:978.5px;top:576px">Jan 21</div><div class="xl" style="left:1043.5px;top:576px">Jan 23</div><div class="xl" style="left:1108.5px;top:576px">Jan 25</div><div class="xl" style="left:1173.5px;top:576px">Jan 27</div><div class="xl" style="left:1238.5px;top:576px">Jan 29</div>
<div class="t" style="left:700.5px;top:612.5px;font-size:11px;color:#616161">Jan 1–31, 2025</div>
<div class="t" style="left:815.5px;top:612.5px;font-size:11px;color:#616161">Jan 1–31, 2024</div>

<!-- breakdown -->
<div class="card" style="left:1340px;top:257px;width:526px;height:389px"></div>
<div class="ttl" style="left:1356px;top:275.5px">Total sales breakdown</div>
<div class="brow" style="top:301.0px"><span class="bl">Gross sales</span><span class="bv">₹78,110.00</span><span class="dash bd"></span></div><div class="brow" style="top:341.6px"><span class="bl">Discounts</span><span class="bv">-₹457.10</span><span class="dash bd"></span></div><div class="brow" style="top:382.2px"><span class="bl">Returns</span><span class="bv">-₹4,257.14</span><span class="dash bd"></span></div><div class="brow" style="top:422.8px"><span class="bl">Net sales</span><span class="bv">₹73,395.76</span><span class="dash bd"></span></div><div class="brow" style="top:463.4px"><span class="bl">Shipping charges</span><span class="bv">₹0.00</span><span class="dash bd"></span></div><div class="brow" style="top:504.0px"><span class="bl">Return fees</span><span class="bv">₹0.00</span><span class="dash bd"></span></div><div class="brow" style="top:544.6px"><span class="bl">Taxes</span><span class="bv">₹161.82</span><span class="dash bd"></span></div><div class="brow" style="top:585.2px"><span class="bl">Total sales</span><span class="bv">₹73,557.58</span><span class="dash bd"></span></div>

<!-- bottom row -->
<div class="card" style="left:256px;top:662px;width:526px;height:254px"></div>
<div class="ttl" style="left:272px;top:680.7px">Total sales by sales channel</div>
<div style="position:absolute;left:330px;top:723px;width:168px;height:168px;border-radius:50%;background:conic-gradient(#0f94d4,#2aa8e4 50%,#55c1f3 99.9%,#0f94d4);"></div>
<div style="position:absolute;left:347px;top:740px;width:134px;height:134px;border-radius:50%;background:#fff"></div>
<div class="t" style="left:381px;top:788.5px;font-size:20.5px;color:#303030;letter-spacing:.15px;-webkit-text-stroke:.3px #303030">₹73.6K</div>
<div class="dash" style="left:408px;top:818px;width:12px;height:1.5px"></div>
<div style="position:absolute;left:528px;top:801px;width:12px;height:12px;border-radius:2px;background:linear-gradient(135deg,#3db6ee,#1597d6)"></div>
<div class="t" style="left:543.5px;top:800.5px;font-size:12.5px;color:#616161">Online Store</div>
<div class="t" style="left:651.5px;top:800.5px;font-size:12.5px;color:#616161">₹73.6K</div>
<div class="dash" style="left:696px;top:806px;width:12px;height:1.5px"></div>

<div class="card" style="left:798px;top:662px;width:526px;height:254px"></div>
<div class="ttl" style="left:814px;top:680.7px">Average order value over time</div>
<div class="t" style="left:814px;top:707.3px;font-size:20px;font-weight:bold;letter-spacing:-.65px">₹3,106.12</div>
<div class="dash" style="left:905.5px;top:717px;height:1.6px"></div>
<svg style="position:absolute;left:0;top:0" width="1893" height="924">
<defs><linearGradient id="lg2" x1="0" y1="770" x2="0" y2="835" gradientUnits="userSpaceOnUse"><stop offset="0" stop-color="#40b8ef"/><stop offset="1" stop-color="#1396d5"/></linearGradient><linearGradient id="fg2" x1="0" y1="751" x2="0" y2="830" gradientUnits="userSpaceOnUse"><stop offset="0" stop-color="#2aa6e4" stop-opacity=".06"/><stop offset="1" stop-color="#1d9fdb" stop-opacity="0"/></linearGradient></defs>
<path d="M870 751H1304M870 830H1304" stroke="#ebebeb" stroke-width="1"/>
<path d="M870.5 777.0 C877.7 777.0 877.7 811.7 885.0 811.7 C892.2 811.7 892.2 829.9 899.4 829.9 C906.6 829.9 906.6 795.9 913.9 795.9 C921.1 795.9 921.1 829.9 928.3 829.9 C935.6 829.9 935.6 824.2 942.8 824.2 C950.0 824.2 950.0 829.9 957.3 829.9 C964.5 829.9 964.5 802.0 971.7 802.0 C979.0 802.0 979.0 822.6 986.2 822.6 C993.4 822.6 993.4 802.0 1000.6 802.0 C1007.9 802.0 1007.9 829.9 1015.1 829.9 C1022.3 829.9 1022.3 777.0 1029.6 777.0 C1036.8 777.0 1036.8 829.9 1044.0 829.9 C1051.2 829.9 1051.2 823.8 1058.5 823.8 C1065.7 823.8 1065.7 829.9 1072.9 829.9 C1080.2 829.9 1080.2 813.5 1087.4 813.5 C1094.6 813.5 1094.6 822.6 1101.9 822.6 C1109.1 822.6 1109.1 829.9 1116.3 829.9 C1123.5 829.9 1123.5 829.9 1130.8 829.9 C1138.0 829.9 1138.0 829.9 1145.2 829.9 C1152.5 829.9 1152.5 829.9 1159.7 829.9 C1166.9 829.9 1166.9 777.0 1174.2 777.0 C1181.4 777.0 1181.4 829.9 1188.6 829.9 C1195.8 829.9 1195.8 807.8 1203.1 807.8 C1210.3 807.8 1210.3 795.9 1217.5 795.9 C1224.8 795.9 1224.8 829.9 1232.0 829.9 C1239.2 829.9 1239.2 777.0 1246.5 777.0 C1253.7 777.0 1253.7 829.9 1260.9 829.9 C1268.2 829.9 1268.2 799.5 1275.4 799.5 C1282.6 799.5 1282.6 823.8 1289.8 823.8 C1297.1 823.8 1297.1 814.7 1304.3 814.7 L1304.3 829.9 L870.5 829.9 Z" fill="url(#fg2)"/>
<path d="M870.5 777.0 C877.7 777.0 877.7 811.7 885.0 811.7 C892.2 811.7 892.2 829.9 899.4 829.9 C906.6 829.9 906.6 795.9 913.9 795.9 C921.1 795.9 921.1 829.9 928.3 829.9 C935.6 829.9 935.6 824.2 942.8 824.2 C950.0 824.2 950.0 829.9 957.3 829.9 C964.5 829.9 964.5 802.0 971.7 802.0 C979.0 802.0 979.0 822.6 986.2 822.6 C993.4 822.6 993.4 802.0 1000.6 802.0 C1007.9 802.0 1007.9 829.9 1015.1 829.9 C1022.3 829.9 1022.3 777.0 1029.6 777.0 C1036.8 777.0 1036.8 829.9 1044.0 829.9 C1051.2 829.9 1051.2 823.8 1058.5 823.8 C1065.7 823.8 1065.7 829.9 1072.9 829.9 C1080.2 829.9 1080.2 813.5 1087.4 813.5 C1094.6 813.5 1094.6 822.6 1101.9 822.6 C1109.1 822.6 1109.1 829.9 1116.3 829.9 C1123.5 829.9 1123.5 829.9 1130.8 829.9 C1138.0 829.9 1138.0 829.9 1145.2 829.9 C1152.5 829.9 1152.5 829.9 1159.7 829.9 C1166.9 829.9 1166.9 777.0 1174.2 777.0 C1181.4 777.0 1181.4 829.9 1188.6 829.9 C1195.8 829.9 1195.8 807.8 1203.1 807.8 C1210.3 807.8 1210.3 795.9 1217.5 795.9 C1224.8 795.9 1224.8 829.9 1232.0 829.9 C1239.2 829.9 1239.2 777.0 1246.5 777.0 C1253.7 777.0 1253.7 829.9 1260.9 829.9 C1268.2 829.9 1268.2 799.5 1275.4 799.5 C1282.6 799.5 1282.6 823.8 1289.8 823.8 C1297.1 823.8 1297.1 814.7 1304.3 814.7" fill="none" stroke="url(#lg2)" stroke-width="2.05"/>
<path d="M1010 888H1020.2" stroke="#1d9fdb" stroke-width="2" stroke-linecap="round"/>
</svg>
<div class="yl" style="left:816px;top:745px">₹10K</div>
<div class="yl" style="left:816px;top:824px">₹0</div>
<div class="xl" style="left:870.5px;top:845.5px">Jan 1</div><div class="xl" style="left:942.8px;top:845.5px">Jan 6</div><div class="xl" style="left:1015.1px;top:845.5px">Jan 11</div><div class="xl" style="left:1087.4px;top:845.5px">Jan 16</div><div class="xl" style="left:1159.7px;top:845.5px">Jan 21</div><div class="xl" style="left:1232.0px;top:845.5px">Jan 26</div>
<div class="t" style="left:1029px;top:882.5px;font-size:11px;color:#616161">Jan 1–31, 2025</div>

<div class="card" style="left:1340px;top:662px;width:526px;height:254px"></div>
<div class="ttl" style="left:1356px;top:680.7px">Total sales by product</div>
<div class="t" style="left:1356px;top:717.8px;font-size:11.6px;color:#616161">Defender ZX1 Mid- Tower Computer Case Gaming Cabinet - White · Circle Gaming · Gaming ...</div>
<div style="position:absolute;left:1356px;top:734px;width:399px;height:31px;border-radius:0 3px 3px 0;background:linear-gradient(90deg,#1497d7,#3fb7ee)"></div>
<div class="t" style="left:1765.5px;top:745px;font-size:11.5px;color:#616161">₹26.8K</div>
<div class="dash" style="left:1818px;top:749px;width:12px;height:1.5px"></div>
<div style="position:absolute;left:1356px;top:767.5px;width:1px;height:31px;background:#5cb9e6"></div>
<div class="t" style="left:1367px;top:778px;font-size:11px;color:#616161">₹0</div>
<div class="t" style="left:1356px;top:818.3px;font-size:11.6px;color:#616161">Defender ZX1 Mid- Tower Computer Case Gaming Cabinet - Black · Circle Gaming · Gaming ...</div>
<div style="position:absolute;left:1356px;top:835px;width:300px;height:31px;border-radius:0 3px 3px 0;background:linear-gradient(90deg,#1497d7,#3cb5ed)"></div>
<div class="t" style="left:1665.5px;top:846px;font-size:11.5px;color:#616161">₹20.1K</div>
<div class="dash" style="left:1716px;top:850px;width:12px;height:1.5px"></div>
<div style="position:absolute;left:1356px;top:868.5px;width:1px;height:31px;background:#5cb9e6"></div>
<div class="t" style="left:1367px;top:879px;font-size:11px;color:#616161">₹0</div>
</body></html>
